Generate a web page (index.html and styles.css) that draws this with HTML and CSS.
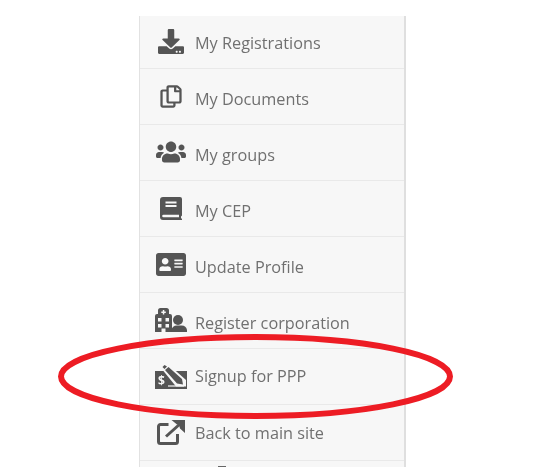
FILE: index.html
```html
<!DOCTYPE html>
<html lang="en">
<head>
<meta charset="utf-8">
<title>Account menu</title>
<link rel="stylesheet" href="styles.css">
</head>
<body>
<nav class="menu">
  <a class="item item-first"><span class="ico"><svg class="i-download" viewBox="0 0 512 512" preserveAspectRatio="none"><path d="M216 0h80c13.300 0 24 10.700 24 24v168h87.700c17.800 0 26.700 21.500 14.100 34.100L269.700 378.300c-7.500 7.500-19.800 7.500-27.300 0L90.100 226.100c-12.600-12.600-3.700-34.100 14.100-34.100H192V24c0-13.300 10.700-24 24-24zm296 376v112c0 13.300-10.700 24-24 24H24c-13.300 0-24-10.700-24-24V376c0-13.300 10.700-24 24-24h146.700l49 49c20.100 20.100 52.500 20.100 72.600 0l49-49H488c13.300 0 24 10.700 24 24zm-124 88c0-11-9-20-20-20s-20 9-20 20 9 20 20 20 20-9 20-20zm64 0c0-11-9-20-20-20s-20 9-20 20 9 20 20 20 20-9 20-20z"/></svg></span><span class="label">My Registrations</span></a>
  <a class="item"><span class="ico"><svg class="i-copy" viewBox="-8 -8 464 528" preserveAspectRatio="none"><path d="M433.941 65.941l-51.882-51.882A48 48 0 0 0 348.118 0H176c-26.510 0-48 21.490-48 48v48H48c-26.510 0-48 21.490-48 48v320c0 26.510 21.490 48 48 48h224c26.510 0 48-21.490 48-48v-48h80c26.510 0 48-21.490 48-48V99.882a48 48 0 0 0-14.059-33.941zM266 464H54a6 6 0 0 1-6-6V150a6 6 0 0 1 6-6h74v224c0 26.510 21.490 48 48 48h96v42a6 6 0 0 1-6 6zm128-96H182a6 6 0 0 1-6-6V54a6 6 0 0 1 6-6h106v88c0 13.255 10.745 24 24 24h88v202a6 6 0 0 1-6 6zm6-256h-64V48h9.632c1.591 0 3.117.632 4.243 1.757l48.368 48.368a6 6 0 0 1 1.757 4.243V112z"/></svg></span><span class="label">My Documents</span></a>
  <a class="item"><span class="ico"><svg class="i-users" viewBox="0 0 640 512"><path d="M96 224c35.300 0 64-28.700 64-64s-28.700-64-64-64-64 28.700-64 64 28.700 64 64 64zm448 0c35.300 0 64-28.700 64-64s-28.700-64-64-64-64 28.700-64 64 28.700 64 64 64zm32 32h-64c-17.600 0-33.500 7.100-45.100 18.600 40.300 22.100 68.900 62 75.100 109.400h66c17.700 0 32-14.300 32-32v-32c0-35.300-28.700-64-64-64zm-256 0c61.900 0 112-50.100 112-112S381.900 32 320 32 208 82.100 208 144s50.100 112 112 112zm76.800 32h-8.300c-20.800 10-43.900 16-68.500 16s-47.600-6-68.500-16h-8.300C179.600 288 128 339.600 128 403.200V432c0 26.500 21.500 48 48 48h288c26.500 0 48-21.500 48-48v-28.800c0-63.600-51.600-115.200-115.200-115.200zm-223.700-13.400C161.500 263.100 145.600 256 128 256H64c-35.300 0-64 28.700-64 64v32c0 17.700 14.300 32 32 32h65.900c6.300-47.400 34.900-87.300 75.200-109.400z"/></svg></span><span class="label">My groups</span></a>
  <a class="item"><span class="ico"><svg class="i-book" viewBox="0 0 22 23"><path fill-rule="evenodd" d="M3 0h17a2 2 0 0 1 2 2v16.500l-1 1v1.500l1 1v1H3a3 3 0 0 1-3-3V3a3 3 0 0 1 3-3zM5.500 4.500v2h11v-2zm0 3.500v2h11V8zM3.500 17.700a1.300 1.300 0 0 0 0 2.600H19v-2.600z"/></svg></span><span class="label">My CEP</span></a>
  <a class="item"><span class="ico"><svg class="i-card" viewBox="0 32 576 448" preserveAspectRatio="none"><path d="M528 32H48C21.500 32 0 53.500 0 80v352c0 26.500 21.500 48 48 48h480c26.500 0 48-21.500 48-48V80c0-26.500-21.500-48-48-48zm-352 96c35.300 0 64 28.700 64 64s-28.700 64-64 64-64-28.700-64-64 28.700-64 64-64zm112 236.800c0 10.600-10 19.200-22.400 19.200H86.400C74 384 64 375.400 64 364.800v-19.200c0-31.800 30.100-57.600 67.200-57.600h5c12.300 5.100 25.700 8 39.800 8s27.600-2.900 39.800-8h5c37.100 0 67.200 25.800 67.200 57.600v19.200zM512 312c0 4.400-3.600 8-8 8H360c-4.400 0-8-3.600-8-8v-16c0-4.400 3.600-8 8-8h144c4.400 0 8 3.600 8 8v16zm0-64c0 4.400-3.600 8-8 8H360c-4.400 0-8-3.600-8-8v-16c0-4.400 3.600-8 8-8h144c4.400 0 8 3.600 8 8v16zm0-64c0 4.400-3.600 8-8 8H360c-4.400 0-8-3.600-8-8v-16c0-4.400 3.600-8 8-8h144c4.400 0 8 3.600 8 8v16z"/></svg></span><span class="label">Update Profile</span></a>
  <a class="item"><span class="ico"><svg class="i-corp" viewBox="0 0 32 24"><path fill-rule="evenodd" d="M5.500 0h6A2.500 2.500 0 0 1 14 2.500V6h1a2 2 0 0 1 2 2v16H0V8a2 2 0 0 1 2-2h1V2.500A2.500 2.500 0 0 1 5.500 0zM7.800 2v1.500H6.300v1.500h1.500v1.500h1.500V5h1.500V3.500H9.300V2zM3 10v3.500h3.500V10zm7.500 0v3.500H14V10zM3 16v3.500h3.500V16zm7.500 0v3.500H14V16zM6.500 20.500V24h4v-3.500z"/><circle cx="23" cy="12" r="5"/><path d="M16.500 24v-2a5.500 5.500 0 0 1 5.500-4.500h4.500A5.500 5.500 0 0 1 32 22v2z"/></svg></span><span class="label">Register corporation</span></a>
  <a class="item item-signup"><span class="ico"><svg class="i-check" viewBox="0 0 32 25"><path d="M0 7h32v18H0z"/><path class="halo" d="M6 4l7-4 18 16v6.500H21z"/><path d="M7.500 3l2-2 2.500 1.500-2.500 2.500zM10 6l3.500-3 13.500 12 1 5.500-6-1z"/><path class="cut" d="M13 22h16"/><text class="dollar" x="3" y="21">$</text></svg></span><span class="label">Signup for PPP</span></a>
  <a class="item item-back"><span class="ico"><svg class="i-ext" viewBox="0 0 28 25"><path class="line" d="M20.500 14v7.500a2 2 0 0 1-2 2h-15a2 2 0 0 1-2-2v-15a2 2 0 0 1 2-2h8"/><path class="line" d="M9 16.500 23.500 3.500"/><path d="M14.500 0H28v13l-5-4.500-1-3.500-2-.5z"/></svg></span><span class="label">Back to main site</span></a>
  <a class="item item-cut"><span class="cut-mark"></span><span>Connect link</span></a>
</nav>
<svg class="ring" viewBox="0 0 545 467" aria-hidden="true"><ellipse cx="255.500" cy="376.500" rx="194.500" ry="39.500"/></svg>
</body>
</html>
```

FILE: styles.css
```css
html, body {
  margin: 0;
  height: 467px;
  overflow: hidden;
  background: #fff;
}

body {
  padding-top: 16px;
  box-sizing: border-box;
  position: relative;
  font-family: "Open Sans", sans-serif;
}

.menu {
  width: 264px;
  margin-left: 139px;
  background: #f7f7f7;
  border-left: 1px solid #e2e2e2;
  border-right: 2px solid #dfdfdf;
  filter: blur(0.4px);
}

.item {
  display: flex;
  align-items: center;
  gap: 8px;
  height: 55px;
  padding-left: 15px;
  border-bottom: 1px solid #e9e9e9;
  color: #707070;
  font-size: 16.250px;
  line-height: 20px;
}

.item-first {
  height: 52px;
}

.label {
  padding-top: 4px;
}

.item-first .label {
  padding-top: 2px;
}

.item-signup .label {
  padding-top: 0;
  padding-bottom: 2px;
}

.item-back .label {
  padding-top: 0;
}

.ico {
  width: 32px;
  height: 32px;
  flex: none;
  display: flex;
  align-items: center;
  justify-content: center;
  margin-top: -1px;
}

.ico svg {
  display: block;
  fill: #555;
}

.i-download { width: 26px; height: 25px; }
.i-copy { width: 22px; height: 23px; }
.i-users { width: 32px; height: 24px; }
.i-book { width: 22px; height: 23px; }
.i-card { width: 30px; height: 23px; }
.i-corp { width: 32px; height: 24px; }
.i-check { width: 32px; height: 25px; }
.i-ext { width: 28px; height: 25px; }

.i-check .halo {
  fill: #f7f7f7;
}

.i-check .cut {
  fill: none;
  stroke: #f7f7f7;
  stroke-width: 1.200;
}

.i-check .dollar {
  fill: #f7f7f7;
  font-family: "Open Sans", sans-serif;
  font-size: 12px;
  font-weight: 700;
}

.i-ext .line {
  fill: none;
  stroke: #555;
  stroke-width: 3;
}

.item-cut {
  align-items: flex-start;
  justify-content: center;
  gap: 7px;
  border-bottom: 0;
  padding: 2px 0 0 0;
}

.cut-mark {
  width: 8px;
  height: 8px;
  margin-top: 3px;
  background: #666;
}

.ring {
  position: absolute;
  left: 0;
  top: 0;
  width: 545px;
  height: 467px;
  pointer-events: none;
}

.ring ellipse {
  fill: none;
  stroke: #ed1c24;
  stroke-width: 6;
}
```
